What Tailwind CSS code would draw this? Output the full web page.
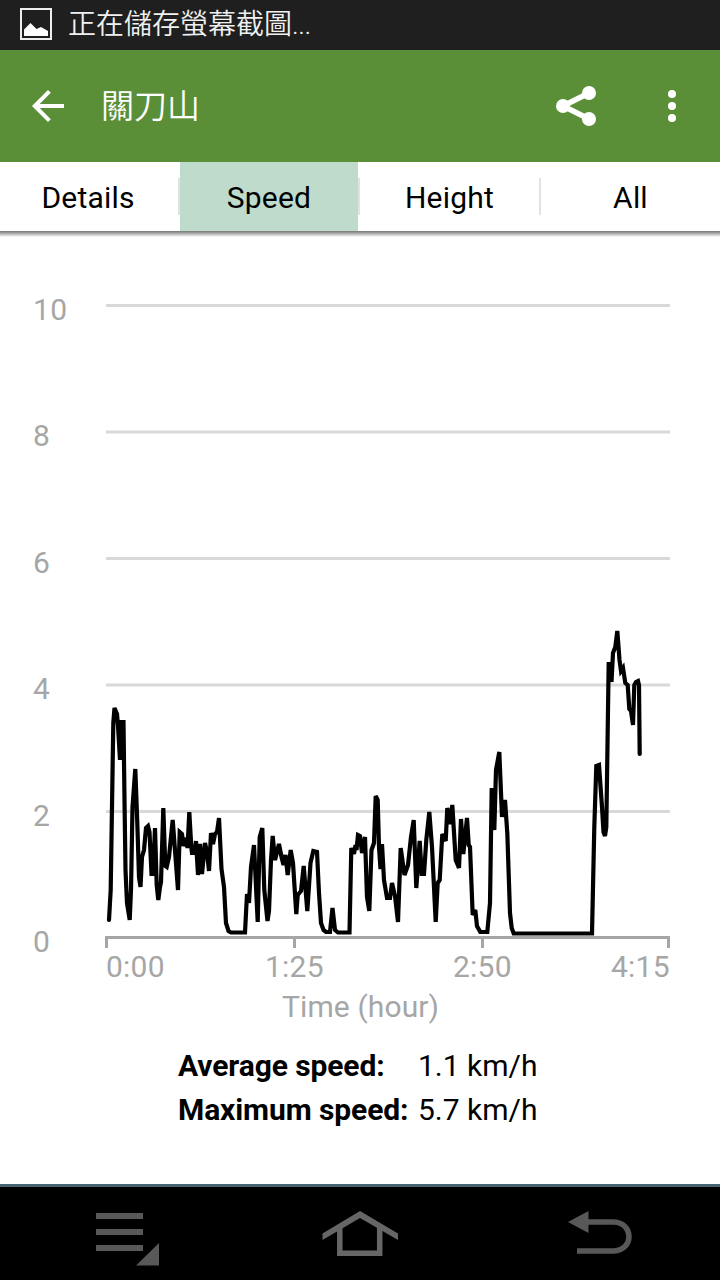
<!DOCTYPE html>
<html lang="zh-Hant">
<head>
  <meta charset="UTF-8" />
  <meta name="viewport" content="width=device-width, initial-scale=1.0" />
  <title>關刀山</title>
  <script src="https://cdn.jsdelivr.net/npm/@tailwindcss/browser@4"></script>
</head>
<body class="h-[1280px] w-[720px] overflow-hidden bg-white font-['Roboto','Noto_Sans_CJK_TC',sans-serif] text-[30px] text-black flex flex-col">
  <!-- Status bar -->
  <div class="h-[50px] shrink-0 bg-[#1f1f1f] flex items-center pl-5 gap-4">
    <svg class="w-8 h-8 shrink-0 mt-[-2px]" viewBox="0 0 32 32">
      <rect x="1" y="1" width="30" height="30" fill="none" stroke="#eee" stroke-width="2" />
      <path d="M4 28V21.500L10.500 15L16.500 21L21 19L28 23V28Z" fill="#fff" />
    </svg>
    <span class="text-[28px] leading-none font-[350] text-[#f0f0f0] whitespace-nowrap">正在儲存螢幕截圖<span class="tracking-[-0.5px]">...</span></span>
  </div>

  <!-- App bar -->
  <header class="h-28 shrink-0 bg-[#5a8f38] text-white flex items-center pl-8 pr-11">
    <svg class="w-8 h-8 shrink-0" viewBox="0 0 32 32" fill="none" stroke="#fff" stroke-width="4">
      <path d="M32 16H3M17.400 1.400L2.800 16L17.400 30.600" />
    </svg>
    <h1 class="ml-[37px] text-[33px] leading-none font-[350]">關刀山</h1>
    <svg class="ml-auto w-10 h-10 shrink-0" viewBox="0 0 40 40" fill="#fff">
      <path d="M33 7L7 20L33 33" fill="none" stroke="#fff" stroke-width="5.500" />
      <circle cx="33" cy="7" r="7" /><circle cx="7" cy="20" r="7" /><circle cx="33" cy="33" r="7" />
    </svg>
    <svg class="ml-[72px] w-2 h-8 shrink-0" viewBox="0 0 8 32" fill="#fff">
      <circle cx="4" cy="4" r="4" /><circle cx="4" cy="16" r="4" /><circle cx="4" cy="28" r="4" />
    </svg>
  </header>

  <!-- Tabs -->
  <nav class="h-[69px] shrink-0 flex items-stretch text-center leading-[71px] tracking-[0.2px]">
    <div class="w-[178px] pr-[2px]">Details</div>
    <div class="w-[2px] h-[37px] mt-4 bg-[#e2e2e2]"></div>
    <div class="w-[178px] bg-[#bfdbcc]">Speed</div>
    <div class="w-[2px] h-[37px] mt-4 bg-[#e2e2e2]"></div>
    <div class="w-[179px]">Height</div>
    <div class="w-[2px] h-[37px] mt-4 bg-[#e2e2e2]"></div>
    <div class="flex-1">All</div>
  </nav>
  <div class="h-[6px] shrink-0 bg-gradient-to-b from-[#777] to-white"></div>

  <!-- Speed chart -->
  <svg class="w-[720px] h-[807px] shrink-0" viewBox="0 237 720 807" font-size="30" fill="#a6a6a6">
    <path d="M106 305.500H670M106 432H670M106 558.500H670M106 685H670M106 811.500H670" stroke="#d9d9d9" stroke-width="3" />
    <path d="M106.500 948V937.500H668.500V948M294.500 937V948M482.500 937V948" fill="none" stroke="#a6a6a6" stroke-width="3" />
    <text x="33" y="320" textLength="34">10</text>
    <text x="33" y="446">8</text>
    <text x="33" y="573">6</text>
    <text x="33" y="699">4</text>
    <text x="33" y="826">2</text>
    <text x="33" y="952">0</text>
    <text x="106" y="977" textLength="58.500">0:00</text>
    <text x="265" y="977" textLength="58.500">1:25</text>
    <text x="453" y="977" textLength="58.500">2:50</text>
    <text x="611" y="977" textLength="58.500">4:15</text>
    <text x="282" y="1017" textLength="157">Time (hour)</text>
    <polyline fill="none" stroke="#000" stroke-width="4.200" stroke-linecap="round" stroke-linejoin="miter" stroke-miterlimit="3" points="
      109,920 110.700,890 113.300,723 114.500,708 117,714 118,726 120,760 121,722 123.500,722 124.500,800 125.500,870 127,903 129.700,920
      131,890 132.500,807 135.300,769 137.300,823 139,877 140.500,887 142,857 144,850 146,828 148,826 149.500,832 151.500,874 153,874
      155,828 156.700,885 158.300,900 160,887 161,882 163.300,808 165.300,866 166.700,867 169,857 172.700,820 175.500,857 178,890
      179.700,832 182,834 183.500,846 186.500,838 187.500,848 189.300,812 191.300,847 192,853 194.500,853 196,841 198,875 200,844 202,874
      205,843 207,852 209,871 211,833 213,844 215,834 217,832 219,818 221.500,869 224,887 226,923 228.500,931 231,932.500 245,932.500 247,894
      249,903 251,867 254,845 257.700,922 259.700,837 262.300,828 264.300,890 267.500,921 269,911 271,860 272.700,836 275,860 279,844
      281.500,857 283.500,865 285.500,855 287.700,875 290.700,850 293,863 296.300,914 297.700,895 301,891 303.700,866 307.300,911
      310.500,863 313.300,851 317,852 319,893 321,923 323.500,930 326,932 330,932 332.500,908 335,930 338,932.500 349.500,932.500 351.300,848
      354,854 355.500,845 356.500,850 358,835 360,836 362,853 365,837 367,897 369.300,911 371.500,850 374,843 375.700,796 377.700,800 379,847
      380.500,869 382,844 384,880 387,898 390,898 392,883 395,896 398,922 400.700,848 404.500,875 408,865 411,837 413.700,820 416.300,888
      419.700,841 421.700,874 424,874 426.300,840 429.300,812 432,847 435.700,922 437.700,883 439.700,880 442.300,834 445.700,841 447.300,808
      450.300,824 452.300,805 455.700,860 459,868 461,819 463.300,854 467,818 468.700,845 470,847 472.700,915 475.300,910 477,926 480.300,932
      487.300,932 490,903 491.700,788 494.300,830 496,770 499.300,752 502,817 505,800 507.300,833 510,913 511.700,928 513.700,933.500
      592,933.500 594.300,827 596.300,766 599,765 602,807 603.500,832 605,836 606.300,827 608.700,662 611.500,682 613,653 615.300,647
      617.300,631 619.500,660 621,671 623,668 625.300,683 627.700,685 629.300,709 631,711 633,725 634.300,685 636,682 638,681 639,685 639.700,754" />
  </svg>

  <!-- Summary -->
  <table class="ml-[178px] w-[362px] table-fixed leading-[44px] whitespace-nowrap">
    <tr class="h-11"><th class="w-[240px] p-0 text-left font-bold tracking-[-0.1px]">Average speed:</th><td class="p-0">1.1 km/h</td></tr>
    <tr class="h-11"><th class="p-0 text-left font-bold tracking-[-0.1px]">Maximum speed:</th><td class="p-0">5.7 km/h</td></tr>
  </table>

  <!-- System navigation -->
  <footer class="mt-auto h-24 shrink-0 bg-black border-t-3 border-[#496471] flex items-start pl-[96px] pr-[88px] pt-[23px]">
    <svg class="w-[63px] h-[56px]" viewBox="0 0 63 56" fill="#585858">
      <path d="M0 3H47V9H0ZM0 19H47V25H0ZM0 35H47V41H0ZM63 33V55.500H40Z" />
    </svg>
    <svg class="ml-[163px] w-[76px] h-[48px]" viewBox="0 0 76 48" fill="none" stroke="#666" stroke-width="5.500">
      <path d="M17.800 18V43.300H57.700V18" />
      <path d="M38 1L76 23.500V30L38 8L.500 30V23.500Z" fill="#666" stroke="none" />
    </svg>
    <svg class="ml-auto w-[64px] h-[46px]" viewBox="0 0 64 46">
      <path d="M18 12H46C66 13 66 40 46 41H9" fill="none" stroke="#585858" stroke-width="5.500" />
      <path d="M0 12L20.500 1V23Z" fill="#585858" />
    </svg>
  </footer>
</body>
</html>
